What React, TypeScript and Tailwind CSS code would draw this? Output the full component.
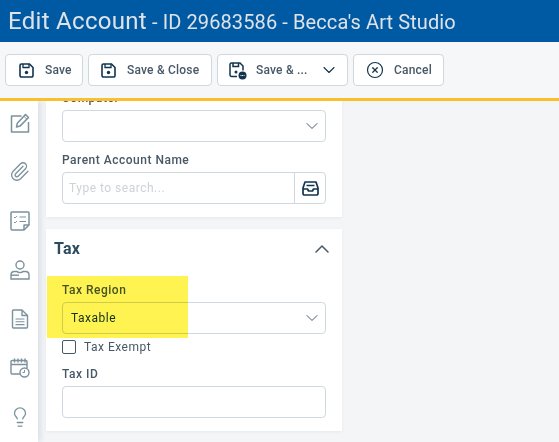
import { ChevronDown, ChevronUp, CircleX, Lightbulb, Paperclip } from "lucide-react";
import type { ReactNode } from "react";

function SaveIcon() {
  return (
    <svg width="15" height="15" viewBox="0 0 15 15" fill="none" stroke="#12344d" strokeWidth="1.6" className="shrink-0">
      <path d="M2.500 1h8L14 4.500v8a1.500 1.500 0 0 1-1.500 1.500h-10A1.500 1.500 0 0 1 1 12.500v-10A1.500 1.500 0 0 1 2.500 1z" />
      <path d="M4 1v3.500h6V1" strokeWidth="1.300" />
      <circle cx="7.500" cy="9.500" r="1.700" fill="#12344d" stroke="none" />
    </svg>
  );
}

function SaveMore() {
  return (
    <svg width="19" height="19" viewBox="0 0 19 19" fill="none" stroke="#12344d" strokeWidth="1.500" className="shrink-0">
      <path d="M9 15.500H3.500a1.500 1.500 0 0 1-1.500-1.500V3.500A1.500 1.500 0 0 1 3.500 2H12l3 3v4.500" />
      <path d="M5 2v3.500h5.500V2" />
      <circle cx="8" cy="11" r="1.500" fill="#12344d" stroke="none" />
      <circle cx="14.500" cy="14.500" r="4" fill="#12344d" stroke="none" />
      <path d="M12.500 14.500h4" stroke="#fff" strokeWidth="1" strokeDasharray="1 .6" />
    </svg>
  );
}

function EditIcon() {
  return (
    <svg width="20" height="20" viewBox="0 0 20 20" fill="none" stroke="#7b919c" strokeWidth="1.500" strokeLinejoin="round">
      <path d="M11.500 3H1.500v16h17V9" />
      <path d="M6.500 14l.8-3.800L15.500 1.500l3 3-8.500 8.600z" />
      <path d="M13.800 3.200l3 3" strokeWidth="1" />
    </svg>
  );
}

function Checklist() {
  return (
    <svg width="20" height="20" viewBox="0 0 20 20" fill="none" stroke="#7b919c" strokeWidth="1.500" strokeLinejoin="round">
      <path d="M14 19H2a1 1 0 0 1-1-1V2a1 1 0 0 1 1-1h16a1 1 0 0 1 1 1v12z" />
      <path d="M14 19v-5h5" />
      <path d="M4 6l1 1 2-2M4 11l1 1 2-2" strokeWidth=".9" />
      <path d="M9.500 6h6.500M9.500 10.500h6.500" strokeWidth="1.200" />
    </svg>
  );
}

function Person() {
  return (
    <svg width="20" height="20" viewBox="0 0 20 20" fill="none" stroke="#7b919c" strokeWidth="1.400">
      <circle cx="10" cy="5" r="4" />
      <path d="M1 19v-4c0-2 1.500-3.500 3.500-3.500h2.500c1 1.500 5 1.500 6 0h2.500c2 0 3.500 1.500 3.500 3.500v4z" />
      <path d="M1 15.200h8" />
    </svg>
  );
}

function FileLines() {
  return (
    <svg width="18" height="20" viewBox="0 0 18 20" fill="none" stroke="#7b919c" strokeWidth="1.400" strokeLinejoin="round">
      <path d="M11 1H2.500a1 1 0 0 0-1 1v16a1 1 0 0 0 1 1h13a1 1 0 0 0 1-1V6.500z" />
      <path d="M11 1v5.500h5.500" />
      <path d="M4.500 10h9M4.500 12.800h9M4.500 15.600h9" strokeWidth="1.100" />
    </svg>
  );
}

function CalendarTime() {
  return (
    <svg width="20" height="20" viewBox="0 0 20 20" fill="none" stroke="#7b919c" strokeWidth="1.400">
      <path d="M10 16H2a1 1 0 0 1-1-1V3.500a1 1 0 0 1 1-1h14a1 1 0 0 1 1 1V10" />
      <path d="M1 6.500h16M4.500 .5v4M8 .5v4M11.500 .5v4M15 .5v4" />
      <circle cx="14.500" cy="14.500" r="4.500" />
      <path d="M14.500 12v2.500h-2" strokeWidth="1" />
    </svg>
  );
}

function InboxIcon() {
  return (
    <svg width="17" height="15" viewBox="0 0 17 15" fill="none" stroke="#12344d" strokeWidth="1.700" strokeLinejoin="round">
      <path d="M3 1h11l2 6v5.500a1.500 1.500 0 0 1-1.500 1.500h-12A1.500 1.500 0 0 1 1 12.500V7z" />
      <path d="M1 8h4.500l1 2h4l1-2H16" />
      <path d="M4.500 4.500h8" strokeWidth="1.500" />
    </svg>
  );
}

function ToolButton({ icon, label, className, trailing }: { icon: ReactNode; label: string; className: string; trailing?: ReactNode }) {
  return (
    <button type="button" className={`flex h-8 shrink-0 items-center rounded border border-[#cfd7df] bg-white text-xs font-medium text-[#475867] ${className}`}>
      {icon}
      <span className="tracking-[0.2px]">{label}</span>
      {trailing}
    </button>
  );
}

function Label({ children }: { children: ReactNode }) {
  return <div className="text-xs leading-4 font-medium tracking-[0.5px] text-[#475867]">{children}</div>;
}

function SelectBox({ value }: { value?: string }) {
  return (
    <div className="flex h-8 items-center justify-between rounded border border-[#cfd7df] pr-[3px] pl-2 text-xs tracking-[0.5px] text-[#12344d]">
      <span>{value}</span>
      <ChevronDown size={20} strokeWidth={1.2} color="#475867" />
    </div>
  );
}

const railIcons = [
  <EditIcon key="edit" />,
  <Paperclip key="clip" size={21} strokeWidth={1.5} color="#7b919c" />,
  <Checklist key="tasks" />,
  <Person key="person" />,
  <FileLines key="file" />,
  <CalendarTime key="calendar" />,
  <Lightbulb key="bulb" size={22} strokeWidth={1.4} color="#7b919c" />,
];

export default function App() {
  return (
    <div className="flex h-[442px] w-[559px] flex-col overflow-hidden bg-[#f3f5f7] font-['Roboto',sans-serif]">
      <header className="flex h-[42px] shrink-0 items-center bg-[#005aa3] pl-2 text-[#dfe3e8]">
        <span className="text-2xl tracking-[0.3px]">Edit Account</span>
        <span className="ml-[5px] pt-[2px] text-xl tracking-[0.1px]">- ID 29683586 - Becca's Art Studio</span>
      </header>

      <div className="z-10 flex h-[59px] shrink-0 gap-[5px] border-b-[3px] border-[#fbbf2c] bg-[#f5f7f9] pt-3 pl-[5px]">
        <ToolButton className="w-[78px] gap-[11px] pl-[13px]" icon={<SaveIcon />} label="Save" />
        <ToolButton className="w-[124px] gap-[11px] pl-[12px]" icon={<SaveIcon />} label="Save & Close" />
        <ToolButton
          className="w-[131px] gap-[9px] pl-[10px]"
          icon={<SaveMore />}
          label="Save & ..."
          trailing={<ChevronDown size={20} strokeWidth={1.3} color="#12344d" className="ml-[2px]" />}
        />
        <ToolButton className="w-[91px] gap-[10px] pl-[12px]" icon={<CircleX size={18} strokeWidth={1.6} color="#12344d" />} label="Cancel" />
      </div>

      <div className="relative flex min-h-0 flex-1">
        <nav className="flex w-[38px] shrink-0 flex-col items-center gap-7 bg-white pt-[11px] shadow-[2px_0_6px_rgba(18,52,77,0.12)]">
          {railIcons.map((icon, i) => (
            <div key={i} className="flex h-[21px] w-full items-center justify-center pl-[1px]">
              {icon}
            </div>
          ))}
        </nav>

        <main className="ml-2 w-[296px] shrink-0">
          <section className="-mt-[21px] bg-white px-4 pt-[10px] pb-[13px] shadow-[0_1px_3px_rgba(18,52,77,0.06)]">
            <Label>Computer</Label>
            <div className="mt-[4px]">
              <SelectBox />
            </div>
            <div className="mt-[10px]">
              <Label>Parent Account Name</Label>
            </div>
            <div className="mt-[4px] flex h-8 rounded border border-[#cfd7df] text-xs tracking-[0.5px]">
              <span className="flex flex-1 items-center pl-[6px] text-[#cdd2d6]">Type to search...</span>
              <span className="flex w-[31px] items-center justify-center border-l border-[#cfd7df]">
                <InboxIcon />
              </span>
            </div>
          </section>

          <section className="mt-3 bg-white px-4 pb-[13px] shadow-[0_1px_3px_rgba(18,52,77,0.06)]">
            <div className="-mx-2 flex h-[38px] items-center justify-between pt-[1px]">
              <h2 className="text-base font-bold tracking-[0.2px] text-[#2c4a60]">Tax</h2>
              <ChevronUp size={24} strokeWidth={1.5} color="#475867" />
            </div>
            <div className="mt-[15px]">
              <Label>Tax Region</Label>
            </div>
            <div className="mt-[4px]">
              <SelectBox value="Taxable" />
            </div>
            <label className="mt-[6px] flex h-[14px] items-center gap-2 text-xs tracking-[0.5px] text-[#475867]">
              <span className="h-[14px] w-[14px] rounded-[2px] border border-[#475867] bg-white" />
              Tax Exempt
            </label>
            <div className="mt-[12px]">
              <Label>Tax ID</Label>
            </div>
            <div className="mt-[4px] h-8 rounded border border-[#cfd7df]" />
          </section>
        </main>

        {/* highlighter mark sits over the form */}
        <div className="pointer-events-none absolute top-[175px] left-[47px] h-[62px] w-[141px] bg-[#fff352] mix-blend-multiply" />
      </div>
    </div>
  );
}
